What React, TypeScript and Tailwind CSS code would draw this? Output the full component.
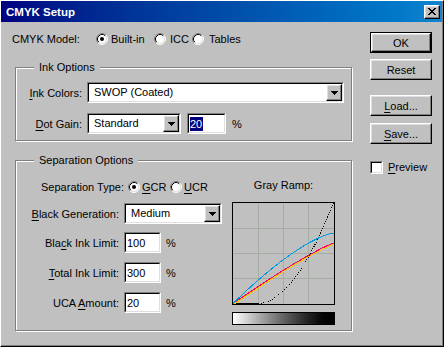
import React from "react";

const sunkenOuter =
  "border border-t-[#808080] border-l-[#808080] border-r-white border-b-white";
const sunkenInner =
  "border border-t-black border-l-black border-r-[#dfdfdf] border-b-[#dfdfdf]";
const raised =
  "border border-t-white border-l-white border-r-black border-b-black shadow-[inset_-1px_-1px_0_#808080,inset_1px_1px_0_#dfdfdf]";

function U({ c }: { c: string }) {
  return <span className="underline decoration-1 underline-offset-[2px]">{c}</span>;
}

function Radio({ checked = false }: { checked?: boolean }) {
  return (
    <svg width="12" height="12" viewBox="0 0 12 12" className="shrink-0">
      <circle cx="6" cy="6" r="5" fill="#fff" />
      <path d="M2.11 9.89 A5.5 5.5 0 0 1 9.89 2.11" fill="none" stroke="#808080" />
      <path d="M9.89 2.11 A5.5 5.5 0 0 1 2.11 9.89" fill="none" stroke="#fff" />
      <path d="M2.82 9.18 A4.5 4.5 0 0 1 9.18 2.82" fill="none" stroke="#000" />
      <path d="M9.18 2.82 A4.5 4.5 0 0 1 2.82 9.18" fill="none" stroke="#dfdfdf" />
      {checked && <circle cx="6" cy="6" r="2" fill="#000" />}
    </svg>
  );
}

function Checkbox() {
  return (
    <div className={`h-[13px] w-[13px] shrink-0 ${sunkenOuter}`}>
      <div className={`h-full w-full bg-white ${sunkenInner}`} />
    </div>
  );
}

function Arrow() {
  return (
    <div className={`flex h-full w-[16px] shrink-0 items-center justify-center bg-[#c0c0c0] ${raised}`}>
      <svg width="7" height="4" viewBox="0 0 7 4" shapeRendering="crispEdges">
        <rect x="0" y="0" width="7" height="1" fill="#000" />
        <rect x="1" y="1" width="5" height="1" fill="#000" />
        <rect x="2" y="2" width="3" height="1" fill="#000" />
        <rect x="3" y="3" width="1" height="1" fill="#000" />
      </svg>
    </div>
  );
}

function Select({ value, width }: { value: string; width: string }) {
  return (
    <div className={`flex h-[21px] shrink-0 ${width} ${sunkenOuter}`}>
      <div className={`flex flex-1 bg-white ${sunkenInner}`}>
        <span className="flex-1 pl-[5px] leading-[17px]">{value}</span>
        <Arrow />
      </div>
    </div>
  );
}

function Field({ children, width }: { children: React.ReactNode; width: string }) {
  return (
    <div className={`flex h-[21px] shrink-0 ${width} ${sunkenOuter}`}>
      <div className={`flex flex-1 items-center bg-white pl-[1px] ${sunkenInner}`}>{children}</div>
    </div>
  );
}

function Button({ children, isDefault = false }: { children: React.ReactNode; isDefault?: boolean }) {
  if (isDefault) {
    return (
      <div className="h-[21px] w-[62px] border border-black">
        <div className={`flex h-full w-full items-center justify-center ${raised}`}>{children}</div>
      </div>
    );
  }
  return <div className={`flex h-[21px] w-[62px] items-center justify-center ${raised}`}>{children}</div>;
}

function Group({ title, height, children }: { title: string; height: string; children: React.ReactNode }) {
  return (
    <div className={`relative ml-[3px] w-[337px] ${height} border border-[#808080] shadow-[inset_1px_1px_0_#fff,1px_1px_0_#fff]`}>
      <span className="absolute left-[18px] top-[-8px] bg-[#c0c0c0] px-[5px] leading-[14px]">{title}</span>
      {children}
    </div>
  );
}

function GrayRamp() {
  const px = (t: number) => 1 + t * 100.5;
  const py = (v: number) => 101.5 - v * 100.5;
  const steps = Array.from({ length: 41 }, (_, i) => i / 40);
  const cyan = steps.map((t) => `${px(t)},${py(0.7 * (1 - Math.pow(1 - t, 1.4)))}`).join(" ");
  const mag = steps.map((t) => `${px(t)},${py(0.6 * (1 - Math.pow(1 - t, 1.15)))}`).join(" ");
  const yel = steps.map((t) => `${px(t) + 0.5},${py(0.6 * (1 - Math.pow(1 - t, 1.15))) + 1}`).join(" ");
  const blk = steps
    .filter((t) => t >= 0.25)
    .map((t) => `${px(t)},${py(Math.pow((t - 0.25) / 0.75, 1.9))}`)
    .join(" ");
  return (
    <svg width="103" height="103" viewBox="0 0 103 103" shapeRendering="crispEdges">
      <rect x="0" y="0" width="103" height="103" fill="#c0c0c0" />
      {[26.5, 51.5, 76.5].map((g) => (
        <g key={g}>
          <line x1={g} y1="1" x2={g} y2="102" stroke="#a4ada2" />
          <line x1="1" y1={g} x2="102" y2={g} stroke="#a4ada2" />
        </g>
      ))}
      <line x1="1" y1="101.5" x2={px(0.25)} y2="101.5" stroke="#000" />
      <polyline points={blk} fill="none" stroke="#000" strokeDasharray="1 1.5" />
      <polyline points={yel} fill="none" stroke="#ffcc00" />
      <polyline points={mag} fill="none" stroke="#ff0066" />
      <polyline points={cyan} fill="none" stroke="#0099dd" />
      <rect x="0.5" y="0.5" width="102" height="102" fill="none" stroke="#000" />
    </svg>
  );
}

function InputRow({ label, value, mt }: { label: React.ReactNode; value: string; mt: string }) {
  return (
    <div className={`${mt} flex h-[21px] items-center`}>
      <span className="w-[103px] text-right">{label}</span>
      <div className="ml-[5px]">
        <Field width="w-[37px]">{value}</Field>
      </div>
      <span className="ml-[5px]">%</span>
    </div>
  );
}

export default function App() {
  return (
    <div className="h-[347px] w-[444px] border border-t-white border-l-white border-r-black border-b-black bg-[#c0c0c0] font-['Liberation_Sans',Arial,sans-serif] text-[11px] leading-[14px] text-black">
      <div className="flex h-full w-full flex-col border-r border-b border-r-[#808080] border-b-[#808080]">
        <div className="flex h-[21px] items-center justify-between bg-linear-to-r from-[#000080] to-[#1084d0] pl-[5px] pr-[2px]">
          <span className="text-[11.5px] font-bold text-white">CMYK Setup</span>
          <div className={`flex h-[14px] w-[16px] items-center justify-center bg-[#c0c0c0] ${raised}`}>
            <svg width="8" height="7" viewBox="0 0 8 7" shapeRendering="crispEdges">
              {[0, 1, 2, 3, 4, 5, 6].map((r) => {
                const a = r <= 3 ? r : 6 - r;
                return (
                  <g key={r}>
                    <rect x={a} y={r} width="2" height="1" fill="#000" />
                    <rect x={6 - a} y={r} width="2" height="1" fill="#000" />
                  </g>
                );
              })}
            </svg>
          </div>
        </div>

        <div className="flex">
          <div className="w-[369px] pl-[11px]">
            <div className="mt-[9px] flex h-4 items-center">
              <span className="w-[84px]">CMYK Model:</span>
              <Radio checked />
              <span className="ml-[3px] w-[43px]">Built-in</span>
              <Radio />
              <span className="ml-[4px] w-[22px]">ICC</span>
              <Radio />
              <span className="ml-[5px]">Tables</span>
            </div>

            <div className="mt-[20px]">
              <Group title="Ink Options" height="h-[74px]">
                <div className="mt-[14px] flex h-[21px] items-center">
                  <span className="w-[66px] text-right">
                    <U c="I" />nk Colors:
                  </span>
                  <div className="ml-[5px]">
                    <Select value="SWOP (Coated)" width="w-[257px]" />
                  </div>
                </div>
                <div className="mt-[10px] flex h-[21px] items-center">
                  <span className="w-[66px] text-right">
                    <U c="D" />ot Gain:
                  </span>
                  <div className="ml-[5px]">
                    <Select value="Standard" width="w-[94px]" />
                  </div>
                  <div className="ml-[6px]">
                    <Field width="w-[39px]">
                      <span className="bg-[#000080] pr-[1px] text-white">20</span>
                    </Field>
                  </div>
                  <span className="ml-[6px]">%</span>
                </div>
              </Group>
            </div>

            <div className="mt-[19px]">
              <Group title="Separation Options" height="h-[171px]">
                <div className="flex">
                  <div className="w-[216px]">
                    <div className="mt-[18px] flex h-4 items-center">
                      <span className="w-[108px] text-right">Separation Type:</span>
                      <div className="ml-[4px]">
                        <Radio checked />
                      </div>
                      <span className="ml-[2px] w-[28px]">
                        <U c="G" />CR
                      </span>
                      <Radio />
                      <span className="ml-[2px]">
                        <U c="U" />CR
                      </span>
                    </div>
                    <div className="mt-[8px] flex h-[21px] items-center">
                      <span className="w-[103px] text-right">
                        <U c="B" />lack Generation:
                      </span>
                      <div className="ml-[5px]">
                        <Select value="Medium" width="w-[98px]" />
                      </div>
                    </div>
                    <InputRow
                      mt="mt-[8px]"
                      value="100"
                      label={
                        <>
                          Bla<U c="c" />k Ink Limit:
                        </>
                      }
                    />
                    <InputRow
                      mt="mt-[9px]"
                      value="300"
                      label={
                        <>
                          <U c="T" />otal Ink Limit:
                        </>
                      }
                    />
                    <InputRow
                      mt="mt-[9px]"
                      value="20"
                      label={
                        <>
                          UCA <U c="A" />mount:
                        </>
                      }
                    />
                  </div>
                  <div className="flex w-[103px] flex-col">
                    <span className="mt-[17px] h-[14px] text-center">Gray Ramp:</span>
                    <div className="mt-[10px]">
                      <GrayRamp />
                    </div>
                    <div className="mt-[7px] h-[13px] border border-black bg-linear-to-r from-white to-black" />
                  </div>
                </div>
              </Group>
            </div>
          </div>

          <div className="flex w-[62px] flex-col">
            <div className="mt-[10px]">
              <Button isDefault>OK</Button>
            </div>
            <div className="mt-[6px]">
              <Button>Reset</Button>
            </div>
            <div className="mt-[15px]">
              <Button>
                <span>
                  <U c="L" />oad...
                </span>
              </Button>
            </div>
            <div className="mt-[7px]">
              <Button>
                <span>
                  <U c="S" />ave...
                </span>
              </Button>
            </div>
            <div className="mt-[16px] flex items-center">
              <Checkbox />
              <span className="ml-[5px]">
                <U c="P" />review
              </span>
            </div>
          </div>
        </div>
      </div>
    </div>
  );
}
